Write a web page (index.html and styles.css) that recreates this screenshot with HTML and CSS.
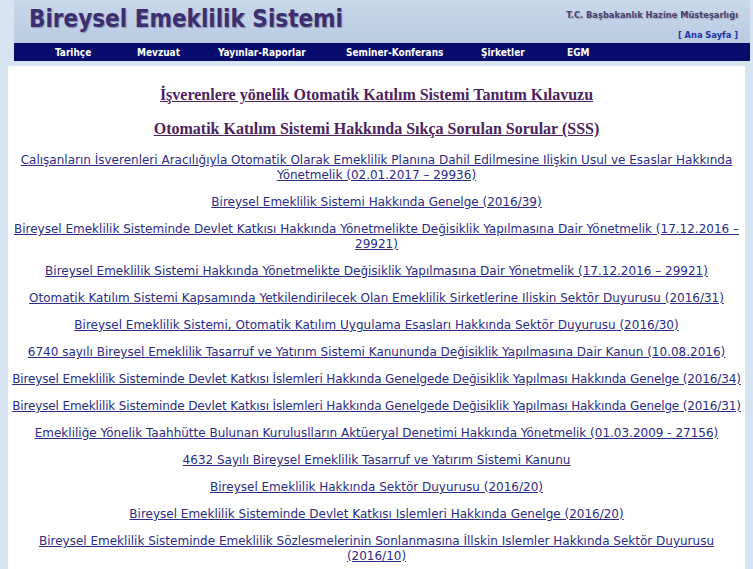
FILE: index.html
```html
<!DOCTYPE html>
<html lang="tr">
<head>
<meta charset="utf-8">
<title>Bireysel Emeklilik Sistemi</title>
<link rel="stylesheet" href="styles.css">
</head>
<body>
<div class="header">
  <div class="top">
    <div class="title">Bireysel Emeklilik Sistemi</div>
    <div class="org">
      <div class="org-name">T.C. Başbakanlık Hazine Müsteşarlığı</div>
      <a class="home" href="#">[ Ana Sayfa ]</a>
    </div>
  </div>
  <nav class="nav">
    <a href="#">Tarihçe</a>
    <a href="#">Mevzuat</a>
    <a href="#">Yayınlar-Raporlar</a>
    <a href="#">Seminer-Konferans</a>
    <a href="#">Şirketler</a>
    <a href="#">EGM</a>
  </nav>
</div>
<div class="content">
  <p class="big"><a href="#">İşverenlere yönelik Otomatik Katılım Sistemi Tanıtım Kılavuzu</a></p>
  <p class="big"><a href="#">Otomatik Katılım Sistemi Hakkında Sıkça Sorulan Sorular (SSS)</a></p>
  <p><a href="#">Calışanların İsverenleri Aracılığıyla Otomatik Olarak Emeklilik Planına Dahil Edilmesine Ilişkin Usul ve Esaslar Hakkında Yönetmelik (02.01.2017 – 29936)</a></p>
  <p><a href="#">Bireysel Emeklilik Sistemi Hakkında Genelge (2016/39)</a></p>
  <p><a href="#">Bireysel Emeklilik Sisteminde Devlet Katkısı Hakkında Yönetmelikte Değisiklik Yapılmasına Dair Yönetmelik (17.12.2016 – 29921)</a></p>
  <p><a href="#">Bireysel Emeklilik Sistemi Hakkında Yönetmelikte Değisiklik Yapılmasına Dair Yönetmelik (17.12.2016 – 29921)</a></p>
  <p><a href="#">Otomatik Katılım Sistemi Kapsamında Yetkilendirilecek Olan Emeklilik Sirketlerine Iliskin Sektör Duyurusu (2016/31)</a></p>
  <p><a href="#">Bireysel Emeklilik Sistemi, Otomatik Katılım Uygulama Esasları Hakkında Sektör Duyurusu (2016/30)</a></p>
  <p><a href="#">6740 sayılı Bireysel Emeklilik Tasarruf ve Yatırım Sistemi Kanununda Değisiklik Yapılmasına Dair Kanun (10.08.2016)</a></p>
  <p class="tight"><a href="#">Bireysel Emeklilik Sisteminde Devlet Katkısı İslemleri Hakkında Genelgede Değisiklik Yapılması Hakkında Genelge (2016/34)</a></p>
  <p class="tight"><a href="#">Bireysel Emeklilik Sisteminde Devlet Katkısı İslemleri Hakkında Genelgede Değisiklik Yapılması Hakkında Genelge (2016/31)</a></p>
  <p><a href="#">Emekliliğe Yönelik Taahhütte Bulunan Kuruluslların Aktüeryal Denetimi Hakkında Yönetmelik (01.03.2009 - 27156)</a></p>
  <p><a href="#">4632 Sayılı Bireysel Emeklilik Tasarruf ve Yatırım Sistemi Kanunu</a></p>
  <p><a href="#">Bireysel Emeklilik Hakkında Sektör Duyurusu (2016/20)</a></p>
  <p><a href="#">Bireysel Emeklilik Sisteminde Devlet Katkısı Islemleri Hakkında Genelge (2016/20)</a></p>
  <p><a href="#">Bireysel Emeklilik Sisteminde Emeklilik Sözlesmelerinin Sonlanmasına İllskin Islemler Hakkında Sektör Duyurusu (2016/10)</a></p>
</div>
</body>
</html>
```
FILE: styles.css
```css
html, body {
  margin: 0;
  padding: 0;
}
body {
  background: #d6e3f0;
  font-family: "DejaVu Sans", Verdana, sans-serif;
  overflow: hidden;
  height: 100vh;
  display: flex;
  flex-direction: column;
}
.header {
  margin-left: 14px;
  margin-right: 3px;
}
.top {
  height: 43px;
  background: linear-gradient(#c9d8ea, #b7cbe3);
  display: flex;
  justify-content: space-between;
  align-items: flex-start;
}
.title {
  font-family: "DejaVu Sans Condensed", "DejaVu Sans", Verdana, sans-serif;
  font-weight: bold;
  font-size: 24px;
  color: #3c2f70;
  text-shadow: 1px 1px 1px #8a92b0;
  padding: 5px 0 0 15px;
}
.org {
  display: flex;
  flex-direction: column;
  align-items: flex-end;
  padding: 10px 12px 0 0;
  font-size: 8.3px;
  font-weight: bold;
}
.org-name {
  color: #4a4170;
  text-shadow: 1px 1px 1px #9aa6c0;
}
.home {
  color: #1e33a8;
  text-decoration: none;
  margin-top: 10px;
}
.nav {
  height: 18px;
  background: #070b6b;
  display: grid;
  grid-template-columns: 82px 81px 128px 135px 86px auto;
  align-items: center;
  padding-left: 41px;
}
.nav a {
  color: #fff;
  font-family: "DejaVu Sans Condensed", "DejaVu Sans", sans-serif;
  font-weight: bold;
  font-size: 10px;
  text-decoration: none;
}
.content {
  flex: 1;
  min-height: 0;
  overflow: hidden;
  background: #fff;
  margin: 5px 8px 0 8px;
  padding: 19px 2px 0 2px;
  text-align: center;
}
.content p {
  margin: 0 0 12px 0;
  font-size: 12px;
  line-height: 15px;
}
.content p:last-child {
  margin-bottom: 0;
}
.content p.tight {
  letter-spacing: -0.13px;
}
.content a {
  color: #2a2c86;
}
.content p.big {
  font-family: "Liberation Serif", "Times New Roman", serif;
  font-weight: bold;
  font-size: 16px;
  line-height: 20px;
  margin-bottom: 14px;
}
.content p.big a {
  color: #4b235f;
}
```
